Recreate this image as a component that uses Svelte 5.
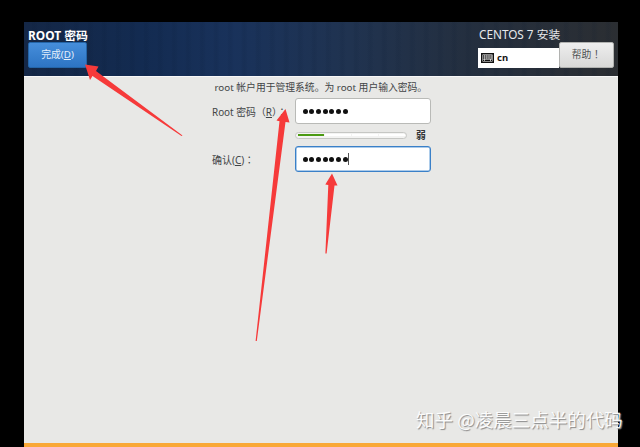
<script>
  const dots = Array.from({ length: 7 });
  const segments = [1, 0, 0, 0];
</script>

<div class="screen">
  <div class="window">
    <header>
      <div class="left">
        <h1>ROOT 密码</h1>
        <button class="done">完成(<u>D</u>)</button>
      </div>
      <div class="right">
        <div class="product">CENTOS 7 安装</div>
        <div class="tools">
          <div class="layout">
            <svg width="13" height="10" viewBox="0 0 13 10">
              <rect x=".7" y=".7" width="11.6" height="8.6" fill="#fff" stroke="#111" stroke-width="1.6" />
              <path d="M2 3h9M2 5h9" stroke="#111" stroke-width="1.5" stroke-dasharray="1.5 .6" />
              <path d="M2 7.2h1.4M4 7.2h5M9.7 7.2H11" stroke="#111" stroke-width="1.5" />
            </svg>
            <span>cn</span>
          </div>
          <button class="help">帮助<span class="wide">！</span></button>
        </div>
      </div>
    </header>
    <main>
      <p>root 帐户用于管理系统。为 root 用户输入密码。</p>
      <div class="row first">
        <span class="label root">Root 密码（<u>R</u>）<span class="wide">：</span></span>
        <div class="field">{#each dots as _}<i></i>{/each}</div>
      </div>
      <div class="strength">
        <div class="meter">{#each segments as on}<b class:on={on === 1}></b>{/each}</div>
        <span>弱</span>
      </div>
      <div class="row">
        <span class="label">确认(<u>C</u>)<span class="wide">：</span></span>
        <div class="field focus">{#each dots as _}<i></i>{/each}<em></em></div>
      </div>
    </main>
    <footer></footer>
  </div>
  <svg class="arrows" width="640" height="447" viewBox="0 0 640 447">
    <path d="M85 64.5L98.5 66.5L96 71L182.5 135.5L181.5 136L92.5 76L90 80Z" />
    <path d="M285.5 109L289.5 122.5L285.5 122L256.8 341L255.6 341L279.5 121.3L276.5 120.5Z" />
    <path d="M332 173.5L337.5 185.5L334.5 185.5L326.6 253.5L325.4 253.5L328.3 185L325.3 184.5Z" />
  </svg>
  <div class="mark">知乎 @凌晨三点半的代码</div>
</div>

<style>
  .screen {
    position: relative;
    box-sizing: border-box;
    width: 640px;
    height: 447px;
    padding: 22px 22px 0 24px;
    overflow: hidden;
    background: #000;
    color: #424546;
    font: 10px/14px "Noto Sans", "Noto Sans CJK SC", sans-serif;
    white-space: nowrap;
  }
  .window {
    display: flex;
    flex-direction: column;
    height: 425px;
    background: #e8e8e6;
  }
  header {
    display: flex;
    justify-content: space-between;
    box-sizing: border-box;
    height: 55px;
    padding: 4px 4px 0;
    border-bottom: 1px solid #f8f8f8;
    background:
      repeating-linear-gradient(90deg, #08183000 0 7px, #08183018 9px 11px, #08183000 14px),
      linear-gradient(90deg, #142746 0, #132b51 20%, #19325b 35%, #203350 55%, #242f3f 75%, #2b2e32 100%);
  }
  h1 {
    box-sizing: border-box;
    height: 16px;
    margin: 0;
    padding-top: 1px;
    color: #fff;
    font-size: 11.9px;
    font-weight: 700;
    line-height: 16px;
  }
  button {
    display: block;
    box-sizing: border-box;
    padding: 0;
    font: inherit;
    border-radius: 2px;
  }
  .done {
    width: 59px;
    height: 26px;
    border: 1px solid #2465a8;
    background: linear-gradient(#468edb, #2d74c3);
    color: #e4effb;
    font-size: 9.8px;
  }
  .right {
    width: 136px;
  }
  .product {
    padding-left: 1px;
    color: #e6e9ec;
    font-size: 11.75px;
    line-height: 16px;
  }
  .tools {
    display: flex;
  }
  .layout {
    display: flex;
    align-items: center;
    gap: 3px;
    box-sizing: border-box;
    width: 81px;
    height: 20px;
    margin-top: 6px;
    padding-left: 3px;
    background: #fff;
    color: #151515;
    font-size: 9.5px;
    font-weight: 700;
  }
  .help {
    width: 55px;
    height: 26px;
    border: 1px solid #b1b2b0;
    background: linear-gradient(#eee, #d8d8d7);
    color: #505354;
    font-size: 9.8px;
  }
  .wide {
    font-family: "Noto Sans CJK TC", sans-serif;
    line-height: 1;
  }
  main {
    flex: 1;
    padding-left: 188px;
  }
  p {
    margin: 4px 0 3px 2.5px;
    font-size: 9.8px;
  }
  .row {
    display: flex;
    align-items: center;
  }
  .label {
    width: 83px;
    padding-top: 1px;
  }
  .root {
    font-size: 9.9px;
  }
  .field {
    display: flex;
    align-items: center;
    gap: 1.7px;
    box-sizing: border-box;
    width: 136px;
    height: 26px;
    padding-left: 6.6px;
    border: 1px solid #b9bab7;
    border-radius: 3px;
    background: #fff;
  }
  .field i {
    width: 5px;
    height: 5px;
    border-radius: 50%;
    background: #111;
  }
  .focus {
    border-color: #3a80c8;
    box-shadow: inset 0 0 0 0.5px #5b98d5;
  }
  .field em {
    width: 1px;
    height: 12px;
    margin-left: -1px;
    background: #555;
  }
  .strength {
    display: flex;
    align-items: center;
    height: 22px;
    padding-left: 83px;
    color: #333638;
  }
  .strength span {
    margin-left: 9px;
    padding-top: 1px;
    font-size: 9.8px;
    font-weight: 700;
  }
  .meter {
    display: flex;
    gap: 1px;
    box-sizing: border-box;
    width: 112px;
    height: 7px;
    padding: 1.5px;
    border: 1px solid #c6c7c4;
    border-radius: 4px;
    background: #f3f3f2;
  }
  .meter b {
    flex: 1;
    height: 2px;
    background: #fff;
  }
  .meter .on {
    background: #4b9a12;
  }
  footer {
    height: 4px;
    background: #f9a837;
  }
  .arrows {
    position: absolute;
    left: 0;
    top: 0;
    fill: #f63a3a;
  }
  .mark {
    position: absolute;
    left: 416px;
    top: 406px;
    color: #fffffff0;
    font: 18.5px/26px "Noto Sans CJK SC", sans-serif;
    text-shadow: 1px 1px 1px #888;
  }
</style>
